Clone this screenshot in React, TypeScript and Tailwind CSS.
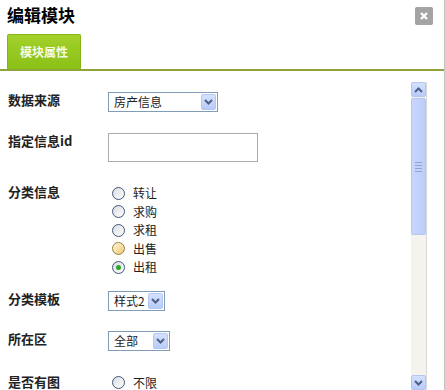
const font = { fontFamily: '"Noto Sans CJK SC", "Liberation Sans", sans-serif' };

const Chevron = ({ up = false }: { up?: boolean }) => (
  <svg width="9" height="6" viewBox="0 0 9 6" className={up ? 'rotate-180' : ''}>
    <polyline points="1,1 4.5,4.5 8,1" fill="none" stroke="#4d6185" strokeWidth="2" />
  </svg>
);

const Select = ({ value, width }: { value: string; width: string }) => (
  <div className={`${width} h-[20px] border border-[#7f9db9] bg-white flex items-center justify-between p-[1px]`}>
    <span className="pl-[4px] text-[12px] leading-[16px] text-[#222]">{value}</span>
    <span className="w-[15px] h-full rounded-[2px] border border-[#b4c6f2] bg-gradient-to-b from-[#d5e1fe] to-[#b8cbf9] flex items-center justify-center">
      <Chevron />
    </span>
  </div>
);

type RadioState = 'off' | 'hover' | 'on';

const Radio = ({ label, state = 'off' }: { label: string; state?: RadioState }) => (
  <div className="h-[18.5px] flex items-center pl-[4px]">
    <span
      className={
        state === 'hover'
          ? 'w-[13px] h-[13px] rounded-full border border-[#9c7f45] bg-gradient-to-br from-[#fff6dc] to-[#f0c76a] flex items-center justify-center'
          : 'w-[13px] h-[13px] rounded-full border border-[#40577c] bg-gradient-to-br from-[#d9dce0] to-white flex items-center justify-center'
      }
    >
      {state === 'on' && <span className="w-[5px] h-[5px] rounded-full bg-[#2aa52a]" />}
    </span>
    <span className="ml-[8px] text-[12px] leading-[16px] text-[#222]">{label}</span>
  </div>
);

const Label = ({ children }: { children: React.ReactNode }) => (
  <div className="w-[100px] shrink-0 text-[13px] leading-[16px] font-bold text-[#222]">{children}</div>
);

export default function App() {
  return (
    <div className="w-[445px] h-[390px] bg-white border-r border-[#c4c4c4] flex flex-col overflow-hidden" style={font}>
      {/* Header */}
      <div className="h-[34px] shrink-0 flex justify-between items-start pl-[7px] pr-[11px] pt-[4px]">
        <h1 className="text-[17px] leading-[22px] font-bold text-black">编辑模块</h1>
        <button className="mt-[3px] w-[18px] h-[18px] rounded-[2px] bg-[#a3a3a3] flex items-center justify-center">
          <svg width="8" height="8" viewBox="0 0 8 8">
            <path d="M1 1 L7 7 M7 1 L1 7" stroke="white" strokeWidth="2.4" />
          </svg>
        </button>
      </div>

      {/* Tabs */}
      <div className="h-[37px] shrink-0 flex items-end pl-[7px] border-b-2 border-[#8ea43a]">
        <div className="w-[74px] h-[35px] rounded-t-[2px] border border-b-0 border-[#86b51a] bg-gradient-to-b from-[#a2d12a] to-[#8bc016] flex items-center justify-center text-[12px] font-bold text-[#f6fbe6]">
          模块属性
        </div>
      </div>

      {/* Body */}
      <div className="flex-1 min-h-0 flex">
        <div className="flex-1 pl-[8px] pt-[21px] flex flex-col">
          <div className="flex items-start">
            <Label>数据来源</Label>
            <Select value="房产信息" width="w-[110px]" />
          </div>

          <div className="flex items-start mt-[21px]">
            <Label>指定信息id</Label>
            <div className="w-[150px] h-[29px] border border-[#a5acb2] bg-white" />
          </div>

          <div className="flex items-start mt-[22px]">
            <Label>分类信息</Label>
            <div className="flex flex-col">
              <Radio label="转让" />
              <Radio label="求购" />
              <Radio label="求租" />
              <Radio label="出售" state="hover" />
              <Radio label="出租" state="on" />
            </div>
          </div>

          <div className="flex items-start mt-[14px]">
            <Label>分类模板</Label>
            <Select value="样式2" width="w-[57px]" />
          </div>

          <div className="flex items-start mt-[20px]">
            <Label>所在区</Label>
            <Select value="全部" width="w-[62px]" />
          </div>

          <div className="flex items-start mt-[23px]">
            <Label>是否有图</Label>
            <Radio label="不限" />
          </div>
        </div>

        {/* Scrollbar */}
        <div className="w-[16px] mt-[11px] mr-[17px] flex flex-col bg-[#f4f3ee] border-r border-[#d8d8d8]">
          <div className="h-[15px] w-[15px] shrink-0 rounded-[2px] border border-[#b4c6f2] bg-gradient-to-b from-[#d5e1fe] to-[#b8cbf9] flex items-center justify-center">
            <Chevron up />
          </div>
          <div className="h-[137px] w-[15px] shrink-0 mt-[1px] rounded-[2px] border border-[#b4c6f2] bg-gradient-to-r from-[#c8d6fc] to-[#bccefa] flex flex-col items-center justify-center gap-[2px]">
            <span className="w-[7px] h-[1px] bg-[#8ea4d8]" />
            <span className="w-[7px] h-[1px] bg-[#8ea4d8]" />
            <span className="w-[7px] h-[1px] bg-[#8ea4d8]" />
            <span className="w-[7px] h-[1px] bg-[#8ea4d8]" />
          </div>
          <div className="flex-1" />
          <div className="h-[15px] w-[15px] shrink-0 rounded-[2px] border border-[#b4c6f2] bg-gradient-to-b from-[#d5e1fe] to-[#b8cbf9] flex items-center justify-center">
            <Chevron />
          </div>
        </div>
      </div>
    </div>
  );
}
